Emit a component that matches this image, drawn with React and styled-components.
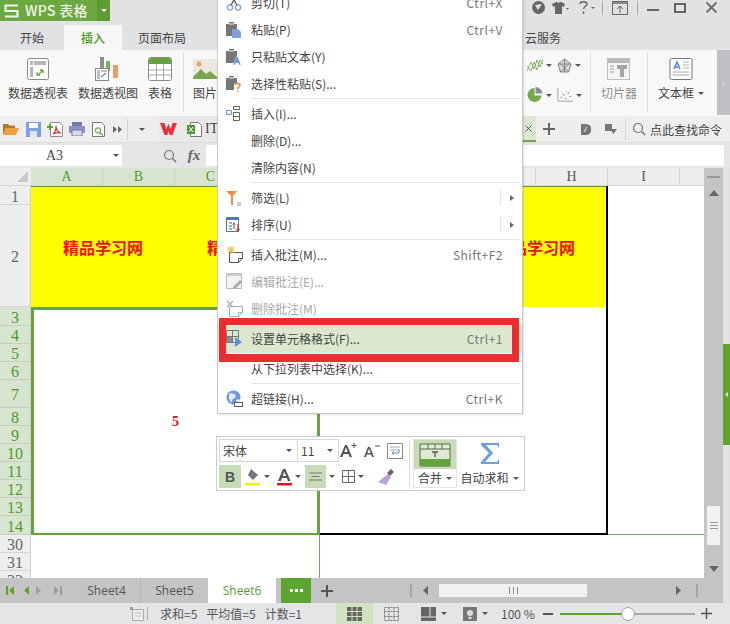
import React from "react";
import styled, { createGlobalStyle } from "styled-components";

const UI = `"Noto Sans CJK SC", "Noto Sans", sans-serif`;
const HEAD = `"Liberation Serif", serif`;

const GlobalStyle = createGlobalStyle`
  html, body { margin: 0; padding: 0; overflow: hidden; background: #e1e2e4; }
  * { box-sizing: border-box; }
`;

const Window = styled.div`
  position: relative;
  width: 730px;
  height: 624px;
  overflow: hidden;
  display: flex;
  flex-direction: column;
  background: #e1e2e4;
  font-family: ${UI};
  font-size: 12px;
  color: #444;
`;

const Ico = styled.svg`
  display: block;
  flex: none;
`;

const Caret = styled.span`
  display: inline-block;
  flex: none;
  width: 0;
  height: 0;
  margin-left: ${(p) => p.$ml || 0}px;
  border-left: 3px solid transparent;
  border-right: 3px solid transparent;
  border-top: 3px solid ${(p) => p.$color || "#555"};
`;

/* title bar */
const TitleBar = styled.div`
  height: 21px;
  display: flex;
  align-items: flex-start;
  justify-content: space-between;
`;

const Brand = styled.div`
  width: 110px;
  height: 21px;
  display: flex;
  align-items: center;
  background: #6ba83f;
  color: #eef5e8;
  font-size: 14px;
  font-weight: 500;
  letter-spacing: 0.3px;
  padding-left: 4px;
`;

const BrandName = styled.span`
  flex: 1;
  margin-left: 6px;
  line-height: 15px;
  white-space: nowrap;
`;

const BrandMenu = styled.span`
  width: 13px;
  height: 21px;
  display: flex;
  align-items: center;
  justify-content: center;
  background: #5d9c31;
`;

const WindowTools = styled.div`
  display: flex;
  align-items: center;
  height: 15px;
`;

const ToolSlot = styled.span`
  width: ${(p) => p.$w}px;
  display: flex;
  align-items: center;
  justify-content: center;
`;

const TitleDivider = styled.span`
  width: 1px;
  height: 14px;
  background: #a9aaac;
`;

/* tabs */
const TabRow = styled.div`
  height: 29px;
  display: flex;
  align-items: flex-end;
`;

const Tab = styled.div`
  width: ${(p) => p.$w}px;
  height: 25px;
  margin-left: ${(p) => p.$ml || 0}px;
  display: flex;
  align-items: center;
  justify-content: center;
  font-size: 12px;
  color: ${(p) => (p.$active ? "#4d9a22" : "#444")};
  background: ${(p) => (p.$active ? "#f7f7f7" : "transparent")};
  font-weight: ${(p) => (p.$active ? 500 : 400)};
`;

/* ribbon */
const Ribbon = styled.div`
  height: 66px;
  display: flex;
  background: #f8f8f8;
`;

const RibbonSide = styled.div`
  display: flex;
  margin-left: ${(p) => (p.$right ? "auto" : 0)};
`;

const BigButton = styled.div`
  width: ${(p) => p.$w}px;
  display: flex;
  flex-direction: column;
  align-items: center;
  padding-top: 6px;
  color: ${(p) => (p.$dim ? "#8d8d8d" : "#444")};
`;

const BigIcon = styled.div`
  height: 26px;
  display: flex;
  align-items: center;
`;

const BigLabel = styled.div`
  margin-top: 2px;
  line-height: 18px;
  white-space: nowrap;
  display: flex;
  align-items: center;
`;

const RibbonRule = styled.div`
  width: 1px;
  height: 60px;
  margin: 2px ${(p) => p.$mr || 0}px 0 ${(p) => p.$ml || 0}px;
  background: #dedede;
`;

const ChartGrid = styled.div`
  width: 62px;
  margin-right: 6px;
  padding-left: 5px;
  display: grid;
  grid-template-columns: 30px 30px;
  grid-template-rows: 30px 30px;
`;

const ChartCell = styled.div`
  display: flex;
  align-items: center;
  gap: 3px;
`;

const RibbonPager = styled.div`
  width: 13px;
  height: 65px;
  margin-left: 11px;
  background: #bfc0c4;
  display: flex;
  align-items: center;
  justify-content: center;
  color: #f4f4f4;
  font-size: 10px;
`;

/* quick access */
const QuickBar = styled.div`
  height: 27px;
  display: flex;
  align-items: center;
  justify-content: space-between;
  background: #eeeeee;
  border-bottom: 1px solid #dddddd;
`;

const QuickGroup = styled.div`
  display: flex;
  align-items: center;
  height: 100%;
`;

const QuickSlot = styled.span`
  width: ${(p) => p.$w}px;
  display: flex;
  align-items: center;
  justify-content: center;
`;

const QuickRule = styled.span`
  width: 1px;
  height: 21px;
  background: #d4d4d4;
  margin: 0 ${(p) => p.$mr || 0}px 0 ${(p) => p.$ml || 0}px;
`;

const DocTab = styled.div`
  height: 26px;
  width: 90px;
  display: flex;
  align-items: center;
  gap: 10px;
  background: #e8e8e8;
  font-family: ${HEAD};
  font-size: 14px;
  padding-left: 1px;
`;

const DocName = styled.span`
  margin-left: -7px;
`;

const DocTabEnd = styled.div`
  width: 14px;
  height: 26px;
  margin-right: 7px;
  background: #dce8d2;
  border-bottom: 2px solid #6fa94a;
  display: flex;
  align-items: center;
  justify-content: center;
`;

const FindCommand = styled.span`
  margin-left: 4px;
  margin-right: 8px;
  white-space: nowrap;
`;

/* formula bar */
const FormulaBar = styled.div`
  height: 25px;
  display: flex;
  align-items: center;
  background: #e4e5e7;
`;

const NameBox = styled.div`
  width: 122px;
  height: 21px;
  display: flex;
  align-items: center;
  justify-content: space-between;
  background: #fff;
  font-family: ${HEAD};
  font-size: 14px;
  color: #444;
  padding: 0 3px 0 46px;
`;

const FormulaTool = styled.span`
  width: 24px;
  margin-left: ${(p) => p.$ml || 0}px;
  display: flex;
  justify-content: center;
  color: #666;
  font-family: "Liberation Serif", serif;
  font-style: italic;
  font-weight: 700;
  font-size: 15px;
`;

const FormulaInput = styled.div`
  width: 518px;
  height: 21px;
  background: #fff;
`;

/* workspace */
const Workspace = styled.div`
  flex: 1;
  min-height: 0;
  display: flex;
`;

const SheetColumn = styled.div`
  flex: 1;
  min-width: 0;
  display: flex;
  flex-direction: column;
`;

const SheetFrame = styled.div`
  flex: 1;
  min-height: 0;
  display: flex;
`;

const Sheet = styled.div`
  flex: 1;
  min-width: 0;
  display: flex;
  flex-direction: column;
  background: #fff;
`;

const ColHeads = styled.div`
  height: 18px;
  flex: none;
  display: flex;
  background: #eeeeee;
  border-bottom: 1px solid #d6d6d6;
`;

const Corner = styled.div`
  width: 31px;
  display: flex;
  align-items: flex-end;
  justify-content: flex-end;
  padding: 0 3px 3px 0;
`;

const ColHead = styled.div`
  width: ${(p) => p.$w || 72}px;
  display: flex;
  align-items: center;
  justify-content: center;
  font-family: ${HEAD};
  font-size: 14px;
  color: ${(p) => (p.$on ? "#4f9a2c" : "#555")};
  background: ${(p) => (p.$on ? "#d7e4cf" : "transparent")};
  border-right: 1px solid ${(p) => (p.$on ? "#c6d3be" : "#d6d6d6")};
`;

const SheetBody = styled.div`
  flex: 1;
  min-height: 0;
  display: flex;
  overflow: hidden;
`;

const RowHeads = styled.div`
  width: 31px;
  flex: none;
  background: #eeeeee;
`;

const RowHead = styled.div`
  height: ${(p) => p.$h || 18}px;
  display: flex;
  align-items: center;
  justify-content: center;
  padding-top: 3px;
  font-family: ${HEAD};
  font-size: 16px;
  color: ${(p) => (p.$on ? "#4f9a2c" : "#666")};
  background: ${(p) => (p.$on ? "#d7e4cf" : "transparent")};
  border-bottom: 1px solid ${(p) => (p.$on ? "#c3d0bb" : "#d6d6d6")};
  border-right: 1px solid #d0d0d0;
`;

const Cells = styled.div`
  flex: 1;
  min-width: 0;
  display: flex;
  flex-direction: column;
`;

const BannerRow = styled.div`
  height: 121px;
  display: flex;
  flex: none;
`;

const Banner = styled.div`
  width: 577px;
  display: grid;
  grid-template-columns: repeat(4, 144px);
  align-items: center;
  justify-items: center;
  background: #ffff00;
  border-top: 2px solid #5f9e33;
  border-right: 2px solid #000;
  margin-top: -1px;
  color: #ee1111;
  font-weight: 700;
  font-size: 16px;
`;

const BlockRow = styled.div`
  height: 228px;
  display: flex;
  flex: none;
`;

const MergedCell = styled.div`
  width: 289px;
  display: flex;
  align-items: center;
  justify-content: center;
  border: 3px solid #65a33d;
  border-bottom-width: 2px;
  color: #d81324;
  font-family: "Liberation Serif", serif;
  font-weight: 700;
  font-size: 14px;
`;

const NextCell = styled.div`
  width: 288px;
  border-right: 2px solid #000;
  border-bottom: 2px solid #000;
`;

const RestCell = styled.div`
  flex: 1;
  border-bottom: 1px solid #76a656;
`;

const EmptyRow = styled.div`
  flex: 1;
  display: flex;
`;

const EmptyLeft = styled.div`
  width: 289px;
  border-right: 1px solid #76a656;
`;

const VScroll = styled.div`
  width: 19px;
  flex: none;
  display: flex;
  flex-direction: column;
  align-items: center;
  background: #c4c4c4;
  padding: 8px 0 6px;
`;

const ScrollGrip = styled.div`
  width: 13px;
  height: 2px;
  margin-bottom: 12px;
  background: #999;
`;

const Thumb = styled.div`
  width: 13px;
  height: 39px;
  margin-top: auto;
  margin-bottom: 21px;
  background: #f1f1f1;
  display: flex;
  flex-direction: column;
  justify-content: center;
  align-items: center;
  gap: 2px;
`;

const ThumbLine = styled.span`
  width: 8px;
  height: 1px;
  background: #9a9a9a;
`;

const Strip = styled.div`
  width: 7px;
  flex: none;
  padding-top: 176px;
`;

const StripTab = styled.div`
  height: 101px;
  background: #5ca52e;
  display: flex;
  align-items: center;
  justify-content: center;
`;

/* sheet tabs */
const SheetTabs = styled.div`
  height: 25px;
  display: flex;
  align-items: center;
  background: #c4c4c4;
  flex: none;
`;

const NavSlot = styled.span`
  width: ${(p) => p.$w}px;
  display: flex;
  justify-content: ${(p) => (p.$end ? "flex-end" : "center")};
  padding-right: ${(p) => (p.$end ? 15 : 0)}px;
`;

const SheetTab = styled.div`
  width: ${(p) => p.$w}px;
  height: 25px;
  display: flex;
  align-items: center;
  justify-content: center;
  font-family: "Open Sans", sans-serif;
  font-size: 12px;
  color: ${(p) => (p.$active ? "#5c9e38" : "#555")};
  background: ${(p) => (p.$active ? "#fff" : "transparent")};
  border-right: ${(p) => (p.$rule ? "1px solid #b5b5b5" : "none")};
`;

const MoreButton = styled.div`
  width: 30px;
  height: 25px;
  margin-left: 5px;
  background: #5ca52e;
  display: flex;
  align-items: center;
  justify-content: center;
  gap: 2px;
`;

const Dot = styled.span`
  width: 3px;
  height: 3px;
  background: #fff;
`;

const AddSheet = styled.span`
  width: 32px;
  display: flex;
  justify-content: center;
`;

const HScrollZone = styled.div`
  margin-left: auto;
  display: flex;
  align-items: center;
  padding-right: 25px;
`;

const HRule = styled.span`
  width: 2px;
  height: 13px;
  background: #a5a5a5;
`;

const HThumb = styled.div`
  width: 148px;
  height: 13px;
  background: #f1f1f1;
  display: flex;
  align-items: center;
  justify-content: center;
  gap: 3px;
`;

const HGrip = styled.span`
  width: 1px;
  height: 7px;
  background: #8a8a8a;
`;

/* status */
const StatusBar = styled.div`
  height: 21px;
  flex: none;
  display: flex;
  align-items: center;
  background: #e4e5e7;
  padding-left: 130px;
`;

const StatusRule = styled.span`
  width: 1px;
  height: 13px;
  margin-left: 2px;
  background: #aaa;
`;

const StatusText = styled.span`
  margin-left: 12px;
  width: 176px;
  display: flex;
  gap: 9px;
  white-space: nowrap;
  font-size: 12px;
  color: #555;
`;

const ViewButton = styled.span`
  width: ${(p) => p.$w}px;
  height: 21px;
  display: flex;
  align-items: center;
  justify-content: center;
  gap: 5px;
  background: ${(p) => (p.$on ? "#cfe3c0" : "transparent")};
`;

const ZoomValue = styled.span`
  margin-left: 9px;
  width: 42px;
  font-size: 12px;
  color: #555;
  white-space: nowrap;
`;

const ZoomTrack = styled.div`
  position: relative;
  width: 135px;
  height: 2px;
  margin: 0 6px 0 7px;
  background: linear-gradient(90deg, #5ca52e 46%, #a8a8a8 46%);
`;

const ZoomKnob = styled.span`
  position: absolute;
  left: 61px;
  top: -6px;
  width: 14px;
  height: 14px;
  border-radius: 50%;
  background: #fbfbfb;
  border: 1px solid #a2a2a2;
`;

/* context menu */
const Menu = styled.div`
  position: absolute;
  left: 217px;
  top: -12px;
  width: 306px;
  padding-bottom: 1px;
  background: #fff;
  border: 1px solid #c9c9c9;
  box-shadow: 1px 1px 2px rgba(0, 0, 0, 0.12);
  z-index: 3;
`;

const MenuItem = styled.div`
  position: relative;
  height: ${(p) => (p.$hot ? 29 : 27)}px;
  margin: ${(p) => (p.$hot ? "2px 0" : 0)};
  display: flex;
  align-items: center;
  color: ${(p) => (p.$off ? "#a9a9a9" : "#444")};
  background: ${(p) => (p.$hot ? "#dbe8cf" : "transparent")};

  ${(p) =>
    p.$hot &&
    `&::after {
      content: "";
      position: absolute;
      left: 1px;
      right: 3px;
      top: -6px;
      bottom: -9px;
      border: solid #ee2c30;
      border-width: 7px 7px 8px 7px;
    }`}
`;

const MenuIcon = styled.span`
  width: 33px;
  padding-left: 8px;
  flex: none;
  display: flex;
  align-items: center;
`;

const MenuLabel = styled.span`
  flex: 1;
  white-space: nowrap;
`;

const Shortcut = styled.span`
  margin-right: 19px;
  color: #777;
  font-size: 12px;
  letter-spacing: 0.5px;
  white-space: nowrap;
`;

const SubArrow = styled.span`
  width: 22px;
  height: 17px;
  border-left: 1px solid #e3e3e3;
  display: flex;
  align-items: center;
  justify-content: center;
`;

const MenuRule = styled.div`
  height: 1px;
  margin: 1px 2px 1px 33px;
  background: #e4e4e4;
`;

/* floating format bar */
const MiniBar = styled.div`
  position: absolute;
  left: 216px;
  top: 436px;
  width: 309px;
  height: 55px;
  display: flex;
  padding: 2px;
  background: #fff;
  border: 1px solid #cccccc;
  z-index: 2;
`;

const MiniLeft = styled.div`
  width: 188px;
  display: flex;
  flex-direction: column;
  gap: 3px;
`;

const MiniRow = styled.div`
  height: 23px;
  display: flex;
  align-items: center;
`;

const FontField = styled.div`
  width: ${(p) => p.$w}px;
  height: 23px;
  display: flex;
  align-items: center;
  justify-content: space-between;
  padding: 0 5px 0 3px;
  border: 1px solid #d6d6d6;
  margin-right: -1px;
  font-size: 12px;
  color: #444;
`;

const MiniSlot = styled.span`
  width: ${(p) => p.$w}px;
  height: 23px;
  display: flex;
  align-items: center;
  justify-content: center;
  gap: 3px;
  background: ${(p) => (p.$on ? "#c6dcb6" : "transparent")};
  color: #555;
  font-family: "Liberation Sans", sans-serif;
  font-weight: 700;
  font-size: 14px;
`;

const MiniRule = styled.div`
  width: 1px;
  height: 48px;
  margin: 2px 3px 0 2px;
  background: #dcdcdc;
`;

const MergeBox = styled.div`
  width: 44px;
  display: flex;
  flex-direction: column;
  border: 1px solid #e4e4e4;
`;

const MergeTop = styled.div`
  height: 29px;
  background: #c6dcb6;
  display: flex;
  align-items: center;
  justify-content: center;
`;

const MiniLabel = styled.div`
  flex: 1;
  display: flex;
  align-items: center;
  justify-content: center;
  gap: 4px;
  white-space: nowrap;
  line-height: 16px;
`;

const SumBox = styled.div`
  flex: 1;
  display: flex;
  flex-direction: column;
`;

const SumTop = styled.div`
  height: 29px;
  display: flex;
  align-items: center;
  justify-content: center;
`;

/* icons */
const BrandLogo = () => (
  <Ico width="15" height="14" viewBox="0 0 15 14">
    <path d="M14 1.500H1.500v5.500h12v5.500H1" stroke="#f1f6ec" strokeWidth="2.200" fill="none" />
  </Ico>
);

const PivotTableIcon = () => (
  <Ico width="24" height="24" viewBox="0 0 24 24">
    <rect x="1.5" y="1.5" width="21" height="21" rx="2" fill="#fff" stroke="#8a8a8a" />
    <path d="M8 4h12v4H8zM4 4h3v4H4zM4 10h3v10H4z" fill="#b8b8b8" />
    <path d="M12 18l5-5M17 13h-3M17 13v3M11 15v3h3" stroke="#6fa94a" strokeWidth="1.4" fill="none" />
  </Ico>
);

const PivotChartIcon = () => (
  <Ico width="26" height="26" viewBox="0 0 26 26">
    <rect x="5" y="1" width="4" height="11" fill="#8d8d8d" />
    <rect x="11" y="5" width="4" height="10" fill="#7fae5e" />
    <rect x="18" y="9" width="5" height="13" fill="#e8a06a" />
    <rect x="0.5" y="12.5" width="13" height="12" fill="#fff" stroke="#888" />
    <path d="M2 14h3v9H2zM6 14h6v2H6z" fill="#c2c2c2" />
    <path d="M6 21l5-4" stroke="#5b87c5" strokeWidth="1.2" />
  </Ico>
);

const TableIcon = () => (
  <Ico width="24" height="24" viewBox="0 0 24 24">
    <rect x="0.5" y="0.5" width="23" height="23" rx="2" fill="#fff" stroke="#8a8a8a" />
    <path d="M1 3a2 2 0 012-2h18a2 2 0 012 2v4H1z" fill="#65a33d" />
    <path d="M1 13h22M1 18h22M8.5 7v16M15.5 7v16" stroke="#a8a8a8" fill="none" />
  </Ico>
);

const PictureIcon = () => (
  <Ico width="24" height="24" viewBox="0 0 24 24">
    <rect x="0" y="2" width="24" height="20" fill="#ece7df" />
    <circle cx="6" cy="7" r="2.5" fill="#eba36a" />
    <path d="M0 20l8-8 5 5 4-3 7 6v2H0z" fill="#77a84f" />
  </Ico>
);

const SlicerIcon = () => (
  <Ico width="24" height="24" viewBox="0 0 24 24">
    <rect x="0.5" y="1.5" width="22" height="21" fill="#f4f4f4" stroke="#bdbdbd" />
    <path d="M1 2h21v4H1z" fill="#b9b9b9" />
    <path d="M3 9h4M3 12h4M3 15h4" stroke="#bbb" strokeWidth="1.5" />
    <path d="M10 8h10v4h-3v8h-4v-8h-3z" fill="#a5a5a5" />
  </Ico>
);

const TextBoxIcon = () => (
  <Ico width="24" height="24" viewBox="0 0 24 24">
    <rect x="1" y="1.5" width="22" height="21" rx="1.5" fill="#fff" stroke="#777" />
    <path d="M5 12l3-7 3 7M6 10h4" stroke="#4d86d6" strokeWidth="1.4" fill="none" />
    <path d="M14 5h6M14 8h6M14 11h6M4 15h16M4 18h16" stroke="#aaa" fill="none" />
  </Ico>
);

const LineChartIcon = () => (
  <Ico width="16" height="14" viewBox="0 0 16 14">
    <path d="M0 13L4 4l3 7 3-9 3 7 3-8M0 8l4 5 3-9 3 8 3-10 3 4" stroke="#74a652" strokeWidth="0.8" fill="none" />
  </Ico>
);

const RadarIcon = () => (
  <Ico width="15" height="15" viewBox="0 0 15 15">
    <path d="M7.500 1L14 6l-2.500 8h-8L1 6zM7.500 1v13M1 6h13M3.500 14l8-8M11.500 14l-8-8" stroke="#777" strokeWidth="0.9" fill="#dcdcdc" />
  </Ico>
);

const PieIcon = () => (
  <Ico width="16" height="16" viewBox="0 0 17 17">
    <path d="M8 1a7.500 7.500 0 107.500 8H8z" fill="#75a84f" />
    <path d="M9 0a7.500 7.500 0 017.500 7H9z" fill="#8c8c8c" />
  </Ico>
);

const ScatterIcon = () => (
  <Ico width="16" height="16" viewBox="0 0 18 16">
    <path d="M1 0v15h17" stroke="#999" fill="none" />
    <path d="M4 10h1.500v1.500H4zM7 7h1.500v1.500H7zM9 11h1.500v1.500H9zM12 5h1.500v1.500H12zM14 9h1.500v1.500H14z" fill="#74a652" />
    <path d="M5 5h1v1H5zM10 3h1v1h-1zM14 2h1v1h-1zM12 12h1v1h-1z" fill="#aaa" />
  </Ico>
);

const FolderIcon = () => (
  <Ico width="16" height="14" viewBox="0 0 16 14">
    <path d="M0 2h5l1 1.500h6V6H3L0 13z" fill="#b5762f" />
    <path d="M3 6h13l-3 7H0z" fill="#f0a03c" />
  </Ico>
);

const SaveIcon = () => (
  <Ico width="15" height="15" viewBox="0 0 15 15">
    <path d="M0 0h15v15H0z" fill="#7f9fdf" />
    <path d="M3 1h9v5H3z" fill="#fff" />
    <path d="M4 9h7v6H4z" fill="#dbe5f8" />
  </Ico>
);

const PdfIcon = () => (
  <Ico width="16" height="15" viewBox="0 0 16 15">
    <path d="M3.500 0.500h9l3 3v11h-12z" fill="#fff" stroke="#8d8d8d" />
    <path d="M0 4h2V2h2v2h2v2H4v2H2V6H0z" fill="#5ca52e" />
    <path d="M6 12c3-2 3-6 3-8 0 3 2 6 5 7-3-1-6 0-8 1z" fill="none" stroke="#d8352a" strokeWidth="1.200" />
  </Ico>
);

const PrintIcon = () => (
  <Ico width="16" height="14" viewBox="0 0 16 14">
    <path d="M3 0h10v4H3z" fill="#7478b0" />
    <path d="M0 4h16v7H0z" fill="#8f93c4" />
    <path d="M3 8h10v6H3z" fill="#d9daec" stroke="#7478b0" />
  </Ico>
);

const PreviewIcon = () => (
  <Ico width="15" height="15" viewBox="0 0 15 15">
    <path d="M1.500 0.500h9l3 3v11h-12z" fill="#fff" stroke="#777" />
    <circle cx="7" cy="8.500" r="2.600" fill="none" stroke="#6fa94a" strokeWidth="1.200" />
    <path d="M9 10.500l3 3" stroke="#6fa94a" strokeWidth="1.400" />
  </Ico>
);

const WpsW = () => (
  <Ico width="17" height="12" viewBox="0 0 17 12">
    <path d="M0 0h4.500l1.800 6L8.500 1l2.200 5 1.800-6H17l-4.500 12h-2.800L8.500 8l-1.200 4H4.500z" fill="#e6323a" />
  </Ico>
);

const XlsIcon = () => (
  <Ico width="15" height="15" viewBox="0 0 15 15">
    <path d="M3.500 0.500h8l3 3v11h-11z" fill="#fff" stroke="#777" />
    <path d="M0 3h8v9H0z" fill="#4f9a35" />
    <path d="M2 5l4 5M6 5l-4 5" stroke="#fff" />
  </Ico>
);

const Magnifier = ({ r = "#777" }) => (
  <Ico width="14" height="14" viewBox="0 0 14 14">
    <circle cx="6" cy="6" r="4.500" fill="none" stroke={r} strokeWidth="1.200" />
    <path d="M9.500 9.500L13 13" stroke={r} strokeWidth="1.600" />
  </Ico>
);

const PlusIcon = ({ size = 12, color = "#666", w = 2 }) => (
  <Ico width={size} height={size} viewBox="0 0 12 12">
    <path d="M6 0v12M0 6h12" stroke={color} strokeWidth={w} />
  </Ico>
);

const MinusIcon = () => (
  <Ico width="10" height="2" viewBox="0 0 10 2">
    <path d="M0 1h10" stroke="#555" strokeWidth="2" />
  </Ico>
);

const CopyScissors = () => (
  <Ico width="16" height="16" viewBox="0 0 16 16">
    <circle cx="4" cy="12.500" r="2.600" fill="none" stroke="#7f9fdf" strokeWidth="1.300" />
    <circle cx="12" cy="12.500" r="2.600" fill="none" stroke="#7f9fdf" strokeWidth="1.300" />
    <path d="M5 10l6-10M11 10L5 0" stroke="#555" strokeWidth="1.300" />
  </Ico>
);

const Clip = ({ children }) => (
  <Ico width="16" height="16" viewBox="0 0 16 16">
    <path d="M0 2h3V0h5v2h3v12H0z" fill="#767676" />
    <path d="M3 1h5v2H3z" fill="#b5b5b5" />
    {children}
  </Ico>
);

const PasteIcon = () => (
  <Clip>
    <path d="M6 7h6l3 3v6H6z" fill="#7f9fdf" />
  </Clip>
);

const PasteTextIcon = () => (
  <Clip>
    <path d="M7 16l3.500-9h1L15 16h-2l-.7-2H9.700L9 16z" fill="#6d93dc" stroke="#fff" strokeWidth="0.400" />
  </Clip>
);

const PasteSpecialIcon = () => (
  <Clip>
    <path d="M8 7.500h7v8.500H8z" fill="#fff" />
    <path d="M9 9c1-2 5-2 5 0 0 2-2 2-2.500 4M11.500 14.500v1.500" fill="none" stroke="#e08a3c" strokeWidth="1.500" />
  </Clip>
);

const InsertIcon = () => (
  <Ico width="16" height="16" viewBox="0 0 16 16">
    <path d="M7.500 0.500h6v3h-6zM7.500 6.500h6v8h-6zM7.500 10.500h6" fill="none" stroke="#666" />
    <path d="M0.500 4.500h5v4h-5z" fill="none" stroke="#6d93dc" />
  </Ico>
);

const FilterIcon = () => (
  <Ico width="16" height="16" viewBox="0 0 16 16">
    <path d="M0 1h11L7 6v9H5V6z" fill="#e8934a" />
    <path d="M11 13h4M11 15h4" stroke="#999" />
  </Ico>
);

const SortIcon = () => (
  <Ico width="16" height="16" viewBox="0 0 16 16">
    <path d="M0.500 0.500h12v14h-12z" fill="#fff" stroke="#4f76bd" />
    <path d="M1 1h11v2H1z" fill="#4f76bd" />
    <path d="M3 6h3M3 9h3M3 12h3M8 12V6M6.800 7.500L8 6l1.200 1.500" stroke="#555" fill="none" />
    <path d="M12 7v7M10.500 12l1.500 2 1.500-2" stroke="#c33" fill="none" strokeWidth="1.200" />
  </Ico>
);

const NoteIcon = ({ mark, stroke = "#555" }) => (
  <Ico width="17" height="17" viewBox="0 0 17 17">
    <path d="M3.500 6.500h13v6l-4 4h-9z" fill="#fff" stroke={stroke} />
    <path d="M12.500 16.500v-4h4" fill="none" stroke={stroke} />
    {mark === "star" && <path d="M5 0v8M1 4h8M2 1l6 6M8 1L2 7" stroke="#e9c35a" strokeWidth="1.100" />}
    {mark === "x" && <path d="M1 1l6 6M7 1L1 7" stroke="#aaa" strokeWidth="1.200" />}
  </Ico>
);

const EditNoteIcon = () => (
  <Ico width="17" height="17" viewBox="0 0 17 17">
    <path d="M0.500 0.500h15v15h-15z" fill="#f2f2f2" stroke="#bbb" />
    <path d="M1 1h14v2H1z" fill="#cfcfcf" />
    <path d="M7 14l7-7 2 2-7 7H7z" fill="#aaa" />
  </Ico>
);

const FormatCellIcon = () => (
  <Ico width="17" height="17" viewBox="0 0 17 17">
    <path d="M0.500 0.500h12v12h-12zM6.500 0.500v12M0.500 6.500h12" fill="none" stroke="#777" />
    <path d="M1 7h5v5H1z" fill="#8d8d8d" />
    <path d="M9 7l7 5-7 5z" fill="#5f8fdc" />
  </Ico>
);

const LinkIcon = () => (
  <Ico width="17" height="17" viewBox="0 0 17 17">
    <circle cx="7.500" cy="7.500" r="7" fill="#6d93dc" />
    <path d="M3 4c2-2 4 0 6 0l1 3-3 2-2 4-2-4zM10 10l3-1 1 2-3 3z" fill="#dfe9f8" />
    <rect x="8.500" y="12.500" width="8" height="4" fill="#fff" stroke="#555" />
  </Ico>
);

const Triangle = ({ dir = "right", color = "#666", w = 5, h = 7 }) => (
  <Ico width={w} height={h} viewBox={`0 0 ${w} ${h}`}>
    <path d={dir === "right" ? `M0 0L${w} ${h / 2}L0 ${h}z` : `M${w} 0L0 ${h / 2}L${w} ${h}z`} fill={color} />
  </Ico>
);

const VArrow = ({ up }) => (
  <Ico width="10" height="6" viewBox="0 0 10 6">
    <path d={up ? "M0 6L5 0l5 6z" : "M0 0l5 6 5-6z"} fill="#666" />
  </Ico>
);

const menuRows = [
  { icon: <CopyScissors />, label: "剪切(T)", key: "Ctrl+X" },
  { icon: <PasteIcon />, label: "粘贴(P)", key: "Ctrl+V" },
  { icon: <PasteTextIcon />, label: "只粘贴文本(Y)" },
  { icon: <PasteSpecialIcon />, label: "选择性粘贴(S)..." },
  { rule: true },
  { icon: <InsertIcon />, label: "插入(I)..." },
  { label: "删除(D)..." },
  { label: "清除内容(N)" },
  { rule: true },
  { icon: <FilterIcon />, label: "筛选(L)", sub: true },
  { icon: <SortIcon />, label: "排序(U)", sub: true },
  { rule: true },
  { icon: <NoteIcon mark="star" />, label: "插入批注(M)...", key: "Shift+F2" },
  { icon: <EditNoteIcon />, label: "编辑批注(E)...", off: true },
  { icon: <NoteIcon mark="x" stroke="#aaa" />, label: "删除批注(M)", off: true },
  { icon: <FormatCellIcon />, label: "设置单元格格式(F)...", key: "Ctrl+1", hot: true },
  { label: "从下拉列表中选择(K)..." },
  { rule: true },
  { icon: <LinkIcon />, label: "超链接(H)...", key: "Ctrl+K" },
];

const rows = [
  { n: 1, h: 19 },
  { n: 2, h: 102 },
  { n: 3, h: 19, on: true },
  { n: 4, h: 18, on: true },
  { n: 5, h: 18, on: true },
  { n: 6, h: 18, on: true },
  { n: 7, h: 28, on: true },
  { n: 8, h: 18, on: true },
  { n: 9, h: 18, on: true },
  { n: 10, h: 18, on: true },
  { n: 11, h: 18, on: true },
  { n: 12, h: 18, on: true },
  { n: 13, h: 18, on: true },
  { n: 14, h: 19, on: true },
  { n: 30, h: 18 },
  { n: 31, h: 18 },
  { n: 32, h: 18 },
];

const ContextMenu = () => (
  <Menu>
    {menuRows.map((r, i) =>
      r.rule ? (
        <MenuRule key={i} />
      ) : (
        <MenuItem key={i} $off={r.off} $hot={r.hot}>
          <MenuIcon>{r.icon}</MenuIcon>
          <MenuLabel>{r.label}</MenuLabel>
          {r.key && <Shortcut>{r.key}</Shortcut>}
          {r.sub && (
            <SubArrow>
              <Triangle w={4} h={6} color="#666" />
            </SubArrow>
          )}
        </MenuItem>
      )
    )}
  </Menu>
);

const FormatBar = () => (
  <MiniBar>
    <MiniLeft>
      <MiniRow>
        <FontField $w={79}>
          宋体
          <Caret />
        </FontField>
        <FontField $w={42}>
          11
          <Caret />
        </FontField>
        <MiniSlot $w={22}>
          <Ico width="18" height="15" viewBox="0 0 18 15">
            <path d="M0 14L5 2h2l5 12H9.500l-1-3H3.500l-1 3zM4.300 9h3.400L6 4.500z" fill="#555" />
            <path d="M14 0v5M11.500 2.500h5" stroke="#555" />
          </Ico>
        </MiniSlot>
        <MiniSlot $w={23}>
          <Ico width="16" height="13" viewBox="0 0 16 13">
            <path d="M0 13L4 3h2l4 10H8l-.8-2.500H2.800L2 13zM3.400 9h3.200L5 4.500z" fill="#555" />
            <path d="M11 2h5" stroke="#555" />
          </Ico>
        </MiniSlot>
        <MiniSlot $w={23}>
          <Ico width="16" height="16" viewBox="0 0 16 16">
            <path d="M0.500 0.500h15v15h-15z" fill="none" stroke="#888" />
            <path d="M3 4h10M3 7h10" stroke="#aaa" />
            <path d="M12 7v3H5M7 8l-2 2 2 2" stroke="#5f8fdc" fill="none" />
          </Ico>
        </MiniSlot>
      </MiniRow>
      <MiniRow>
        <MiniSlot $w={22} $on>B</MiniSlot>
        <MiniSlot $w={32}>
          <Ico width="16" height="18" viewBox="0 0 16 18">
            <path d="M6 1l7 6-5 5-5-5z" fill="#777" />
            <path d="M0 15h15v2.500H0z" fill="#f5f100" />
          </Ico>
          <Caret />
        </MiniSlot>
        <MiniSlot $w={32}>
          <Ico width="15" height="18" viewBox="0 0 15 18">
            <path d="M1 13L6 1h2.500l5 12H11l-1.200-3H5l-1.200 3zM5.700 8h3.400L7.300 3.500z" fill="#555" />
            <path d="M0 15h15v2.500H0z" fill="#d8141c" />
          </Ico>
          <Caret />
        </MiniSlot>
        <MiniSlot $w={21} $on>
          <Ico width="13" height="9" viewBox="0 0 13 9">
            <path d="M0 1h13M2.500 4.500h8M0 8h13" stroke="#777" />
          </Ico>
        </MiniSlot>
        <MiniSlot $w={11}>
          <Caret />
        </MiniSlot>
        <MiniSlot $w={32}>
          <Ico width="13" height="13" viewBox="0 0 13 13">
            <path d="M0.500 0.500h12v12h-12zM6.500 0.500v12M0.500 6.500h12" fill="none" stroke="#666" />
          </Ico>
          <Caret />
        </MiniSlot>
        <MiniSlot $w={34}>
          <Ico width="17" height="16" viewBox="0 0 17 16">
            <path d="M10 5l3 3-5 8-8-3z" fill="#b9a2dc" />
            <path d="M9 4l4-4 3 3-4 4z" fill="#666" />
          </Ico>
        </MiniSlot>
      </MiniRow>
    </MiniLeft>
    <MiniRule />
    <MergeBox>
      <MergeTop>
        <Ico width="32" height="24" viewBox="0 0 32 24">
          <path d="M1 1h30v22H1zM1 6h30M9 1v5M16 1v5M23 1v5" fill="#dbead0" stroke="#5a6a52" />
          <path d="M1 16h30v7H1z" fill="#65a33d" />
          <path d="M13 9h6M16 9v5" stroke="#555" strokeWidth="1.300" />
        </Ico>
      </MergeTop>
      <MiniLabel>
        合并
        <Caret />
      </MiniLabel>
    </MergeBox>
    <SumBox>
      <SumTop>
        <Ico width="20" height="23" viewBox="0 0 20 23">
          <path d="M1 1h18v5l-2-3H6l7 8-8 9h12l2-3v5H1v-2l8-9-8-8z" fill="#6d9fe0" />
        </Ico>
      </SumTop>
      <MiniLabel>
        自动求和
        <Caret />
      </MiniLabel>
    </SumBox>
  </MiniBar>
);

export default function App() {
  return (
    <Window>
      <GlobalStyle />
      <TitleBar>
        <Brand>
          <BrandLogo />
          <BrandName>WPS 表格</BrandName>
          <BrandMenu>
            <Caret $color="#fff" />
          </BrandMenu>
        </Brand>
        <WindowTools>
          <ToolSlot $w={21}>
            <Ico width="13" height="13" viewBox="0 0 13 13">
              <circle cx="6.500" cy="6.500" r="6.500" fill="#666" />
              <path d="M3 4l3 5 4-6z" fill="#e1e2e4" />
            </Ico>
          </ToolSlot>
          <ToolSlot $w={23}>
            <Ico width="17" height="12" viewBox="0 0 17 12">
              <path d="M0 2l4-2h1c1 1 2 1 3 0h1l4 2-1 3-2-1v8H3V4L1 5z" fill="#666" />
              <path d="M14 6h3l-1.500 2z" fill="#666" />
            </Ico>
          </ToolSlot>
          <ToolSlot $w={30}>
            <Ico width="17" height="13" viewBox="0 0 17 13">
              <path d="M1 3c0-3 7-3 7 0 0 2-3 2-3.500 5M4.500 10.500V13" stroke="#666" strokeWidth="1.500" fill="none" />
              <path d="M12 6h4l-2 2z" fill="#666" />
            </Ico>
          </ToolSlot>
          <TitleDivider />
          <ToolSlot $w={34}>
            <Ico width="16" height="14" viewBox="0 0 16 14">
              <path d="M0.500 0.500h15v13h-15z" fill="none" stroke="#666" />
              <path d="M1 1h14v2H1z" fill="#888" />
              <path d="M8 12V5M5 8l3-3 3 3" stroke="#666" fill="none" />
            </Ico>
          </ToolSlot>
          <TitleDivider />
          <ToolSlot $w={30}>
            <Ico width="12" height="12" viewBox="0 0 12 12">
              <path d="M0 8h12" stroke="#666" strokeWidth="2" />
            </Ico>
          </ToolSlot>
          <ToolSlot $w={24}>
            <Ico width="12" height="10" viewBox="0 0 12 10">
              <path d="M1 1h10v8H1z" fill="none" stroke="#666" strokeWidth="2" />
            </Ico>
          </ToolSlot>
          <ToolSlot $w={38}>
            <Ico width="11" height="11" viewBox="0 0 11 11">
              <path d="M0.500 0.500l10 10M10.500 0.500l-10 10" stroke="#666" strokeWidth="1.800" />
            </Ico>
          </ToolSlot>
        </WindowTools>
      </TitleBar>

      <TabRow>
        <Tab $w={64}>开始</Tab>
        <Tab $w={58} $active>插入</Tab>
        <Tab $w={80}>页面布局</Tab>
        <Tab $w={60} $ml={311}>云服务</Tab>
      </TabRow>

      <Ribbon>
        <RibbonSide>
          <BigButton $w={76}>
            <BigIcon>
              <PivotTableIcon />
            </BigIcon>
            <BigLabel>数据透视表</BigLabel>
          </BigButton>
          <BigButton $w={64}>
            <BigIcon>
              <PivotChartIcon />
            </BigIcon>
            <BigLabel>数据透视图</BigLabel>
          </BigButton>
          <BigButton $w={40}>
            <BigIcon>
              <TableIcon />
            </BigIcon>
            <BigLabel>表格</BigLabel>
          </BigButton>
          <RibbonRule $ml={3} $mr={9} />
          <BigButton $w={24}>
            <BigIcon>
              <PictureIcon />
            </BigIcon>
            <BigLabel>图片</BigLabel>
          </BigButton>
        </RibbonSide>
        <RibbonSide $right>
          <ChartGrid>
            <ChartCell>
              <LineChartIcon />
              <Caret />
            </ChartCell>
            <ChartCell>
              <RadarIcon />
              <Caret />
            </ChartCell>
            <ChartCell>
              <PieIcon />
              <Caret />
            </ChartCell>
            <ChartCell>
              <ScatterIcon />
              <Caret />
            </ChartCell>
          </ChartGrid>
          <RibbonRule $mr={8} />
          <BigButton $w={40} $dim>
            <BigIcon>
              <SlicerIcon />
            </BigIcon>
            <BigLabel>切片器</BigLabel>
          </BigButton>
          <RibbonRule $ml={8} $mr={8} />
          <BigButton $w={50}>
            <BigIcon>
              <TextBoxIcon />
            </BigIcon>
            <BigLabel>
              文本框
              <Caret $ml={4} />
            </BigLabel>
          </BigButton>
          <RibbonPager>›</RibbonPager>
        </RibbonSide>
      </Ribbon>

      <QuickBar>
        <QuickGroup>
          <QuickSlot $w={22}>
            <FolderIcon />
          </QuickSlot>
          <QuickSlot $w={22}>
            <SaveIcon />
          </QuickSlot>
          <QuickSlot $w={22}>
            <PdfIcon />
          </QuickSlot>
          <QuickSlot $w={22}>
            <PrintIcon />
          </QuickSlot>
          <QuickSlot $w={21}>
            <PreviewIcon />
          </QuickSlot>
          <QuickSlot $w={18}>
            <Ico width="10" height="7" viewBox="0 0 10 7">
              <path d="M0 0l4 3.500L0 7zM5 0l4 3.500L5 7z" fill="#666" />
            </Ico>
          </QuickSlot>
          <QuickRule $mr={8} />
          <QuickSlot $w={12}>
            <Caret />
          </QuickSlot>
          <QuickSlot $w={11} />
          <DocTab>
            <WpsW />
            <XlsIcon />
            <DocName>IT</DocName>
          </DocTab>
        </QuickGroup>
        <QuickGroup>
          <DocTabEnd>
            <Ico width="7" height="7" viewBox="0 0 7 7">
              <path d="M0.500 0.500l6 6M6.500 0.500l-6 6" stroke="#555" />
            </Ico>
          </DocTabEnd>
          <QuickSlot $w={12}>
            <PlusIcon />
          </QuickSlot>
          <QuickSlot $w={19} />
          <QuickSlot $w={24}>
            <Ico width="10" height="11" viewBox="0 0 10 11">
              <path d="M0 0h5a5 5 0 010 11H0z" fill="#777" />
              <path d="M3 8l3-5" stroke="#eee" />
            </Ico>
          </QuickSlot>
          <QuickSlot $w={26}>
            <Ico width="12" height="10" viewBox="0 0 12 10">
              <path d="M0 0h7v7H0z" fill="#777" />
              <path d="M5 5h7L8.500 10z" fill="#777" />
            </Ico>
          </QuickSlot>
          <QuickRule $ml={1} $mr={6} />
          <Magnifier />
          <FindCommand>点此查找命令</FindCommand>
        </QuickGroup>
      </QuickBar>

      <FormulaBar>
        <NameBox>
          A3
          <Caret />
        </NameBox>
        <FormulaTool $ml={36}>
          <Magnifier />
        </FormulaTool>
        <FormulaTool>fx</FormulaTool>
        <FormulaInput />
      </FormulaBar>

      <Workspace>
        <SheetColumn>
          <SheetFrame>
            <Sheet>
              <ColHeads>
                <Corner>
                  <Ico width="11" height="11" viewBox="0 0 11 11">
                    <path d="M11 0v11H0z" fill="#c9c9c9" />
                  </Ico>
                </Corner>
                {["A", "B", "C", "D"].map((c) => (
                  <ColHead key={c} $on>
                    {c}
                  </ColHead>
                ))}
                <ColHead $on $w={1} />
                {["E", "F", "G", "H", "I"].map((c) => (
                  <ColHead key={c}>{c}</ColHead>
                ))}
              </ColHeads>
              <SheetBody>
                <RowHeads>
                  {rows.map((r) => (
                    <RowHead key={r.n} $h={r.h} $on={r.on}>
                      {r.n}
                    </RowHead>
                  ))}
                </RowHeads>
                <Cells>
                  <BannerRow>
                    <Banner>
                      <span>精品学习网</span>
                      <span>精品学习网</span>
                      <span>精品学习网</span>
                      <span>精品学习网</span>
                    </Banner>
                  </BannerRow>
                  <BlockRow>
                    <MergedCell>5</MergedCell>
                    <NextCell />
                    <RestCell />
                  </BlockRow>
                  <EmptyRow>
                    <EmptyLeft />
                  </EmptyRow>
                </Cells>
              </SheetBody>
            </Sheet>
            <VScroll>
              <ScrollGrip />
              <VArrow up />
              <Thumb>
                <ThumbLine />
                <ThumbLine />
                <ThumbLine />
              </Thumb>
              <VArrow />
            </VScroll>
          </SheetFrame>
          <SheetTabs>
            <NavSlot $w={19}>
              <Ico width="8" height="9" viewBox="0 0 8 9">
                <path d="M0 0h2v9H0zM8 0v9L3 4.500z" fill="#5ca52e" />
              </Ico>
            </NavSlot>
            <NavSlot $w={14}>
              <Triangle dir="left" color="#5ca52e" w={5} h={9} />
            </NavSlot>
            <NavSlot $w={10}>
              <Triangle color="#9d9d9d" w={5} h={9} />
            </NavSlot>
            <NavSlot $w={30}>
              <Ico width="8" height="9" viewBox="0 0 8 9">
                <path d="M0 0v9l5-4.500zM6 0h2v9H6z" fill="#9d9d9d" />
              </Ico>
            </NavSlot>
            <SheetTab $w={68} $rule>Sheet4</SheetTab>
            <SheetTab $w={67}>Sheet5</SheetTab>
            <SheetTab $w={68} $active>Sheet6</SheetTab>
            <MoreButton>
              <Dot />
              <Dot />
              <Dot />
            </MoreButton>
            <AddSheet>
              <PlusIcon size={12} color="#555" />
            </AddSheet>
            <HScrollZone>
              <HRule />
              <NavSlot $w={27}>
                <Triangle dir="left" color="#666" w={5} h={9} />
              </NavSlot>
              <HThumb>
                <HGrip />
                <HGrip />
                <HGrip />
              </HThumb>
              <NavSlot $w={109} $end>
                <Triangle color="#666" w={5} h={9} />
              </NavSlot>
              <HRule />
            </HScrollZone>
          </SheetTabs>
        </SheetColumn>
        <Strip>
          <StripTab>
            <Triangle dir="left" color="#dff0cf" w={3} h={5} />
          </StripTab>
        </Strip>
      </Workspace>

      <StatusBar>
        <Ico width="15" height="14" viewBox="0 0 15 14">
          <path d="M2.500 2.500h11v11h-11z" fill="#efefef" stroke="#aaa" />
          <path d="M0 0h3v3H0z" fill="#999" />
          <path d="M5 6h7M5 9h7" stroke="#bbb" />
        </Ico>
        <StatusRule />
        <StatusText>
          <span>求和=5</span>
          <span>平均值=5</span>
          <span>计数=1</span>
        </StatusText>
        <ViewButton $w={37} $on>
          <Ico width="15" height="14" viewBox="0 0 15 14">
            <path d="M0 0h15v14H0z" fill="#666" />
            <path d="M0 4.500h15M0 9.500h15M5 0v14M10 0v14" stroke="#cfe3c0" />
          </Ico>
        </ViewButton>
        <ViewButton $w={36}>
          <Ico width="15" height="14" viewBox="0 0 15 14">
            <path d="M0.500 0.500h14v13h-14zM0.500 4.500h14M0.500 9.500h14M5 0.500v13M10 0.500v13" fill="none" stroke="#777" strokeDasharray="2 1" />
          </Ico>
        </ViewButton>
        <ViewButton $w={49}>
          <Ico width="15" height="14" viewBox="0 0 15 14">
            <path d="M0 0h15v14H0z" fill="#666" />
            <path d="M9 0v10M0 10h15" stroke="#e4e5e7" />
          </Ico>
          <Caret />
        </ViewButton>
        <ViewButton $w={34}>
          <Ico width="14" height="14" viewBox="0 0 14 14">
            <path d="M0 0h14v14H0z" fill="#777" />
            <circle cx="7" cy="6" r="3" fill="#ddd" />
            <path d="M5.500 10h3v2h-3z" fill="#ddd" />
          </Ico>
          <Caret />
        </ViewButton>
        <ZoomValue>100 %</ZoomValue>
        <MinusIcon />
        <ZoomTrack>
          <ZoomKnob />
        </ZoomTrack>
        <PlusIcon size={11} color="#555" w={1.6} />
      </StatusBar>

      <ContextMenu />
      <FormatBar />
    </Window>
  );
}
